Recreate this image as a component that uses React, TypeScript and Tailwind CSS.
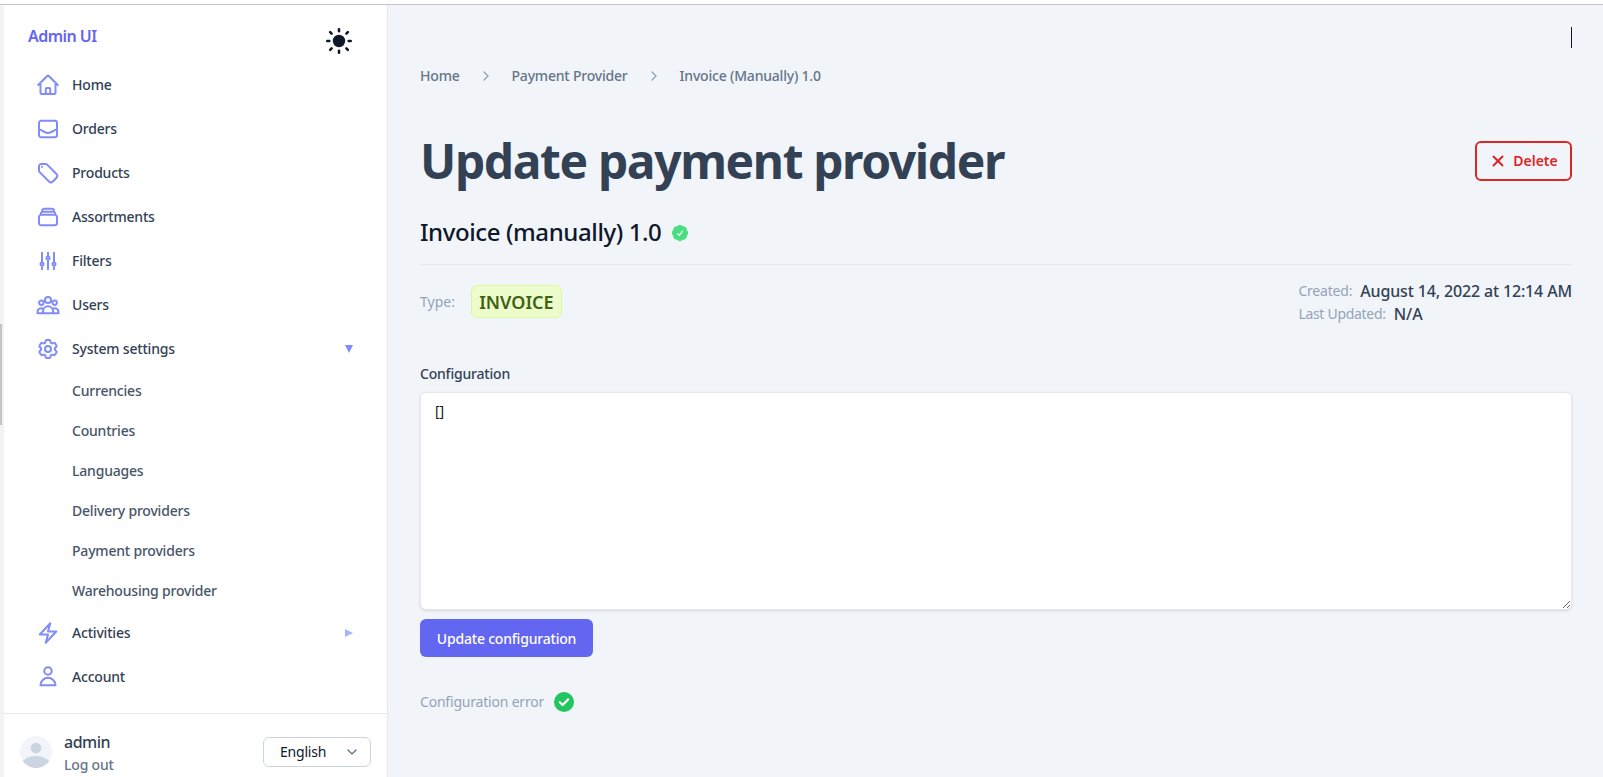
import React from "react";
import { X, ChevronRight, ChevronDown } from "lucide-react";

const font = "font-['Noto_Sans',sans-serif]";

const Outline = ({ d }: { d: string }) => (
  <svg viewBox="0 0 24 24" fill="none" stroke="currentColor" strokeWidth={2} strokeLinecap="round" strokeLinejoin="round" className="w-6 h-6 text-[#818cf8] shrink-0">
    <path d={d} />
  </svg>
);

const icons = {
  home: "m2.25 12 8.954-8.955c.44-.439 1.152-.439 1.591 0L21.75 12M4.5 9.75v10.125c0 .621.504 1.125 1.125 1.125H9.75v-4.875c0-.621.504-1.125 1.125-1.125h2.25c.621 0 1.125.504 1.125 1.125V21h4.125c.621 0 1.125-.504 1.125-1.125V9.75M8.25 21h8.25",
  orders: "M5.25 3.75h13.5A2.25 2.25 0 0 1 21 6v12a2.25 2.25 0 0 1-2.25 2.25H5.25A2.25 2.25 0 0 1 3 18V6a2.25 2.25 0 0 1 2.25-2.25ZM3 12.5c3.5 0 4.5 3.5 9 3.5s5.500-3.500 9-3.500",
  tag: "M9.568 3H5.250A2.250 2.250 0 0 0 3 5.250v4.318c0 .597.237 1.170.659 1.591l9.581 9.581c.699.699 1.780.872 2.607.330a18.095 18.095 0 0 0 5.223-5.223c.542-.827.369-1.908-.330-2.607L11.160 3.660A2.250 2.250 0 0 0 9.568 3ZM6 6h.008v.008H6V6Z",
  stack: "M6 6.878V6a2.250 2.250 0 0 1 2.250-2.250h7.500A2.250 2.250 0 0 1 18 6v.878m-12 0c.235-.083.487-.128.750-.128h10.500c.263 0 .515.045.750.128m-12 0A2.250 2.250 0 0 0 4.500 9v.878m13.500-3A2.250 2.250 0 0 1 19.500 9v.878m0 0a2.246 2.246 0 0 0-.750-.128H5.250c-.263 0-.515.045-.750.128m15 0A2.250 2.250 0 0 1 21 12v6a2.250 2.250 0 0 1-2.250 2.250H5.250A2.250 2.250 0 0 1 3 18v-6c0-.980.626-1.813 1.500-2.122",
  sliders: "M6 13.500V3.750m0 9.750a1.500 1.500 0 0 1 0 3m0-3a1.500 1.500 0 0 0 0 3m0 3.750V16.500m12-3V3.750m0 9.750a1.500 1.500 0 0 1 0 3m0-3a1.500 1.500 0 0 0 0 3m0 3.750V16.500m-6-9V3.750m0 3.750a1.500 1.500 0 0 1 0 3m0-3a1.500 1.500 0 0 0 0 3m0 9.750V10.500",
  users: "M15 7a3 3 0 1 1-6 0 3 3 0 0 1 6 0ZM7.500 9.700a2.200 2.200 0 1 1-4.400 0 2.200 2.200 0 0 1 4.400 0ZM20.900 9.700a2.200 2.200 0 1 1-4.400 0 2.200 2.200 0 0 1 4.400 0ZM7 20.300v-2a5 5 0 0 1 10 0v2M1.500 20.300v-1.500a3.500 3.500 0 0 1 5.700-2.700M22.500 20.300v-1.500a3.500 3.500 0 0 0-5.700-2.700M1.500 20.300h21",
  cog: "M9.594 3.940c.090-.542.560-.940 1.110-.940h2.593c.550 0 1.020.398 1.110.940l.213 1.281c.063.374.313.686.645.870.074.040.147.083.220.127.325.196.720.257 1.075.124l1.217-.456a1.125 1.125 0 0 1 1.370.490l1.296 2.247a1.125 1.125 0 0 1-.260 1.431l-1.003.827c-.293.241-.438.613-.430.992a7.723 7.723 0 0 1 0 .255c-.008.378.137.750.430.991l1.004.827c.424.350.534.955.260 1.430l-1.298 2.247a1.125 1.125 0 0 1-1.369.491l-1.217-.456c-.355-.133-.750-.072-1.076.124a6.470 6.470 0 0 1-.220.128c-.331.183-.581.495-.644.869l-.213 1.281c-.090.543-.560.940-1.110.940h-2.594c-.550 0-1.019-.398-1.110-.940l-.213-1.281c-.062-.374-.312-.686-.644-.870a6.520 6.520 0 0 1-.220-.127c-.325-.196-.720-.257-1.076-.124l-1.217.456a1.125 1.125 0 0 1-1.369-.490l-1.297-2.247a1.125 1.125 0 0 1 .260-1.431l1.004-.827c.292-.240.437-.613.430-.991a6.932 6.932 0 0 1 0-.255c.007-.380-.138-.751-.430-.992l-1.004-.827a1.125 1.125 0 0 1-.260-1.430l1.297-2.247a1.125 1.125 0 0 1 1.370-.491l1.216.456c.356.133.751.072 1.076-.124.072-.044.146-.086.220-.128.332-.183.582-.495.644-.869l.214-1.280ZM15 12a3 3 0 1 1-6 0 3 3 0 0 1 6 0Z",
  bolt: "m3.750 13.500 10.500-11.250L12 10.500h8.250L9.750 21.750 12 13.500H3.750Z",
  user: "M15.750 6a3.750 3.750 0 1 1-7.500 0 3.750 3.750 0 0 1 7.500 0ZM4.501 20.250a7.500 7.500 0 0 1 14.998 0H4.501Z",
};

const NavRow = ({ icon, label, caret }: { icon: string; label: string; caret?: "down" | "right" }) => (
  <div className="h-11 flex items-center pl-8 pr-[34px]">
    <Outline d={icon} />
    <span className="ml-3 text-sm font-medium text-[#334155] tracking-[-0.2px]">{label}</span>
    {caret === "down" && (
      <svg viewBox="0 0 8 8" className="ml-auto w-2 h-2 text-[#818cf8]" fill="currentColor">
        <path d="M0 0h8L4 8z" />
      </svg>
    )}
    {caret === "right" && (
      <svg viewBox="0 0 8 8" className="ml-auto w-2 h-2 text-[#a5b4fc]" fill="currentColor">
        <path d="M0 0l8 4-8 4z" />
      </svg>
    )}
  </div>
);

const SubRow = ({ label }: { label: string }) => (
  <div className="h-10 flex items-center pl-[68px] text-sm font-medium text-[#475569] tracking-[-0.2px]">{label}</div>
);

const Sun = () => (
  <svg viewBox="0 0 28 28" className="w-7 h-7 text-[#0f172a]">
    <circle cx="14" cy="14" r="6.200" fill="currentColor" />
    <g stroke="currentColor" strokeWidth="2.600" strokeLinecap="round">
      <path d="M14 2.300v2M14 23.700v2M2.300 14h2M23.700 14h2M5.200 5.200l1.400 1.400M21.400 21.400l1.400 1.400M5.200 22.800l1.400-1.400M21.400 6.600l1.400-1.400" />
    </g>
  </svg>
);

const Sidebar = () => (
  <aside className="w-[384px] shrink-0 bg-white border-r border-[#e2e8f0] flex flex-col">
    <div className="h-[58px] flex justify-between pl-[24px] pr-[34px]">
      <span className="mt-[19px] text-base font-semibold text-[#6366f1] leading-6 tracking-[-0.55px]">Admin UI</span>
      <span className="mt-[22px]"><Sun /></span>
    </div>
    <div>
      <NavRow icon={icons.home} label="Home" />
      <NavRow icon={icons.orders} label="Orders" />
      <NavRow icon={icons.tag} label="Products" />
      <NavRow icon={icons.stack} label="Assortments" />
      <NavRow icon={icons.sliders} label="Filters" />
      <NavRow icon={icons.users} label="Users" />
      <NavRow icon={icons.cog} label="System settings" caret="down" />
      <SubRow label="Currencies" />
      <SubRow label="Countries" />
      <SubRow label="Languages" />
      <SubRow label="Delivery providers" />
      <SubRow label="Payment providers" />
      <SubRow label="Warehousing provider" />
      <NavRow icon={icons.bolt} label="Activities" caret="right" />
      <NavRow icon={icons.user} label="Account" />
    </div>
    <div className="mt-auto h-[64px] border-t border-[#e2e8f0] flex items-start pt-[22px] pl-4 pr-[16px]">
      <span className="w-8 h-8 rounded-full bg-[#f1f5f9] overflow-hidden shrink-0">
        <svg viewBox="0 0 24 24" className="w-8 h-8 text-[#cbd5e1]" fill="currentColor">
          <path d="M24 20.993V24H0v-2.996A14.977 14.977 0 0112.004 15c4.904 0 9.260 2.354 11.996 5.993zM16.002 8.999a4 4 0 11-8 0 4 4 0 018 0z" />
        </svg>
      </span>
      <div className="ml-3 -mt-1 flex flex-col">
        <span className="text-base font-medium text-[#334155] leading-5 tracking-[-0.5px]">admin</span>
        <span className="text-sm font-medium text-[#64748b] leading-5 mt-[3px] tracking-[-0.2px]">Log out</span>
      </div>
      <div className="ml-auto mt-px w-[108px] h-[30px] border border-[#cbd5e1] rounded-md bg-white flex items-center pl-[16px] pr-[10px] text-sm text-[#0f172a] tracking-[-0.2px]">
        <span>English</span>
        <ChevronDown className="ml-auto w-4 h-4 text-[#64748b]" strokeWidth={2} />
      </div>
    </div>
  </aside>
);

const Crumb = () => <ChevronRight className="w-4 h-4 text-[#94a3b8] mx-[18px]" strokeWidth={2} />;

const BadgeCheck = () => (
  <svg viewBox="0 0 24 24" fill="currentColor" className="w-5 h-5 text-[#4ade80]">
    <path d="M8.603 3.799A4.490 4.490 0 0 1 12 2.250c1.357 0 2.573.600 3.397 1.549a4.490 4.490 0 0 1 3.498 1.307 4.491 4.491 0 0 1 1.307 3.497A4.490 4.490 0 0 1 21.750 12a4.490 4.490 0 0 1-1.549 3.397 4.491 4.491 0 0 1-1.307 3.497 4.491 4.491 0 0 1-3.497 1.307A4.490 4.490 0 0 1 12 21.750a4.490 4.490 0 0 1-3.397-1.549 4.490 4.490 0 0 1-3.498-1.306 4.491 4.491 0 0 1-1.307-3.498A4.490 4.490 0 0 1 2.250 12c0-1.357.600-2.573 1.549-3.397a4.490 4.490 0 0 1 1.307-3.497 4.490 4.490 0 0 1 3.497-1.307Zm7.007 6.387a.750.750 0 1 0-1.220-.872l-3.236 4.530L9.530 12.220a.750.750 0 0 0-1.060 1.060l2.250 2.250a.750.750 0 0 0 1.140-.094l3.750-5.250Z" />
  </svg>
);

const CheckCircle = () => (
  <svg viewBox="0 0 20 20" className="w-5 h-5 ml-[10px]">
    <circle cx="10" cy="10" r="10" fill="#22c55e" />
    <path d="M5.800 10.300l2.800 2.700 5.600-5.600" fill="none" stroke="#fff" strokeWidth="2.200" strokeLinecap="round" strokeLinejoin="round" />
  </svg>
);

const Main = () => (
  <main className="flex-1 min-w-0 bg-[#f1f5f9] pl-8 pr-[31px] pt-[22px] flex flex-col">
    <div className="self-end w-px h-[21px] bg-[#0f172a]" />
    <nav className="mt-[18px] flex items-center h-5 text-sm font-medium text-[#64748b] tracking-[-0.2px]">
      <span>Home</span>
      <Crumb />
      <span>Payment Provider</span>
      <Crumb />
      <span>Invoice (Manually) 1.0</span>
    </nav>
    <div className="mt-[54px] flex items-center justify-between h-[42px]">
      <h1 className="text-5xl font-bold text-[#334155] tracking-[-1.4px]">Update payment provider</h1>
      <button className="w-[97px] h-10 border-2 border-[#dc2626] rounded-md flex items-center justify-center text-sm font-semibold text-[#dc2626]">
        <X className="w-[18px] h-[18px] mr-[6px]" strokeWidth={2.5} />
        Delete
      </button>
    </div>
    <div className="mt-[34px] flex items-center h-8">
      <h2 className="text-2xl font-medium text-[#0f172a] tracking-[-0.4px]">Invoice (manually) 1.0</h2>
      <span className="ml-[9px] mt-[2px]"><BadgeCheck /></span>
    </div>
    <div className="mt-4 border-t border-[#e2e8f0] flex justify-between pt-[14px]">
      <div className="flex items-center h-[33px] mt-[6px]">
        <span className="text-sm text-[#94a3b8]">Type:</span>
        <span className="ml-4 w-[91px] h-[33px] flex items-center justify-center rounded-md border border-[#d9f99d] bg-[#ecfccb] text-lg font-semibold text-[#3f6212]">INVOICE</span>
      </div>
      <div className="flex flex-col">
        <div className="flex items-center h-[23px]">
          <span className="text-sm text-[#94a3b8] tracking-[-0.2px]">Created:</span>
          <span className="ml-2 text-base font-medium text-[#334155] tracking-[-0.15px]">August 14, 2022 at 12:14 AM</span>
        </div>
        <div className="flex items-center h-[23px]">
          <span className="text-sm text-[#94a3b8] tracking-[-0.3px]">Last Updated:</span>
          <span className="ml-2 text-base font-medium text-[#334155]">N/A</span>
        </div>
      </div>
    </div>
    <label className="mt-[39px] h-5 text-sm font-medium text-[#334155] tracking-[-0.2px]">Configuration</label>
    <textarea
      readOnly
      defaultValue="[]"
      className="mt-2 h-[218px] w-full rounded-md border border-[#e2e8f0] bg-white shadow-sm px-[14px] py-2 text-sm text-[#0f172a] outline-none"
    />
    <button className="mt-[9px] w-[173px] h-[38px] pt-px rounded-md bg-[#6366f1] text-sm font-medium text-white self-start tracking-[-0.2px]">
      Update configuration
    </button>
    <div className="mt-[35px] flex items-center h-5">
      <span className="text-sm text-[#94a3b8] tracking-[-0.2px]">Configuration error</span>
      <CheckCircle />
    </div>
  </main>
);

export default function App() {
  return (
    <div className={`${font} w-full h-screen overflow-hidden bg-[#f3f3f3] flex flex-col`}>
      <div className="h-[5px] shrink-0 bg-white border-b border-[#c4c4c4]" />
      <div className="flex-1 min-h-0 flex">
        <div className="w-1 shrink-0 bg-[#f3f3f3] relative">
          <div className="absolute left-0 top-[319px] w-[2px] h-[101px] bg-[#c4c4c4]" />
        </div>
        <Sidebar />
        <Main />
      </div>
    </div>
  );
}
